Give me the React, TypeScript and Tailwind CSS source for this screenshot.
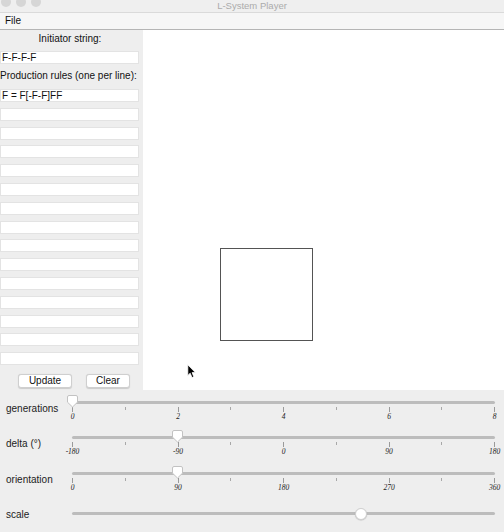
import React from "react";

const FONT = { fontFamily: '"Liberation Sans", Arial, sans-serif' };

function PentThumb({ pct }: { pct: number }) {
  return (
    <svg
      width="13"
      height="13"
      viewBox="0 0 13 13"
      className="absolute top-[-0.5px]"
      style={{ left: `calc(${pct}% - 6.5px)` }}
    >
      <path
        d="M1.5 2 Q1.5 0.5 3 0.5 H10 Q11.5 0.5 11.5 2 V7.2 L6.5 12 L1.5 7.2 Z"
        fill="#ffffff"
        stroke="#c2c2c2"
        strokeWidth="1"
      />
    </svg>
  );
}

function TickSlider({
  label,
  labels,
  pct,
}: {
  label: string;
  labels: string[];
  pct: number;
}) {
  const ticks = [0, 1, 2, 3, 4, 5, 6, 7, 8];
  return (
    <div className="flex h-[35px]">
      <div className="w-[72px] pl-[6px] pt-[8px] text-[10px] leading-[12px] text-[#1c1c1c]">
        {label}
      </div>
      <div className="relative w-[423px]">
        <div className="mt-[6px] h-[3px] rounded-full bg-[#bcbcbc]" />
        <div className="mt-[3px] flex h-[5px] items-start justify-between">
          {ticks.map((t) => (
            <div
              key={t}
              className={
                t % 2 === 0 ? "h-[5px] w-px bg-[#9a9a9a]" : "h-[3px] w-px bg-[#a8a8a8]"
              }
            />
          ))}
        </div>
        <div
          className="mt-[1px] flex justify-between text-[7.5px] italic leading-[8px] text-[#222]"
          style={{ fontFamily: '"Liberation Serif", "Times New Roman", serif' }}
        >
          {labels.map((l) => (
            <div key={l} className="flex w-px justify-center">
              <span className="whitespace-nowrap">{l}</span>
            </div>
          ))}
        </div>
        <PentThumb pct={pct} />
      </div>
    </div>
  );
}

function RuleField({ text }: { text?: string }) {
  return (
    <div className="flex h-[13px] w-[139px] items-center border border-[#e3e3e3] bg-white pl-[1px] text-[10px] leading-none text-[#111]">
      <span>{text ?? ""}</span>
    </div>
  );
}

export default function App() {
  const rules = Array.from({ length: 15 }, (_, i) => i);
  return (
    <div className="flex h-[532px] w-[504px] flex-col overflow-hidden bg-[#eeeeee]" style={FONT}>
      {/* title bar */}
      <div className="flex h-[13px] items-start overflow-hidden border-b border-[#dadada] bg-[#efefef]">
        <div className="-mt-[3px] flex w-[60px] gap-[5px] pl-[1px]">
          <div className="h-[10px] w-[10px] rounded-full bg-[#d6d6d6]" />
          <div className="h-[10px] w-[10px] rounded-full bg-[#d6d6d6]" />
          <div className="h-[10px] w-[10px] rounded-full bg-[#d6d6d6]" />
        </div>
        <div className="flex-1 text-center text-[9.5px] leading-[11px] text-[#ababab]">
          L-System Player
        </div>
        <div className="w-[60px]" />
      </div>
      {/* menu bar */}
      <div className="flex h-[17px] items-center border-b border-[#b5b5b5] bg-[#f6f6f6] pl-[5px] text-[10px] leading-[12px] text-[#111]">
        File
      </div>
      {/* main */}
      <div className="flex h-[360px]">
        <div className="flex w-[143px] flex-col bg-[#eeeeee] pt-[2px]">
          <div className="h-[14px] pr-[3px] text-center text-[10px] leading-[14px] text-[#111]">
            Initiator string:
          </div>
          <div className="mt-[5px]">
            <RuleField text="F-F-F-F" />
          </div>
          <div className="mt-[5px] h-[14px] whitespace-nowrap text-[10px] leading-[14px] text-[#111]">
            Production rules (one per line):
          </div>
          <div className="mt-[6px] flex flex-col gap-[5.8px]">
            {rules.map((i) => (
              <RuleField key={i} text={i === 0 ? "F = F[-F-F]FF" : undefined} />
            ))}
          </div>
          <div className="mt-[9px] flex">
            <button className="ml-[18px] h-[14px] w-[54px] rounded-[3px] border border-[#cfcfcf] bg-white text-[10px] leading-[12px] text-[#111] shadow-[0_0.5px_1px_rgba(0,0,0,0.15)]">
              Update
            </button>
            <button className="ml-[14px] h-[14px] w-[44px] rounded-[3px] border border-[#cfcfcf] bg-white text-[10px] leading-[12px] text-[#111] shadow-[0_0.5px_1px_rgba(0,0,0,0.15)]">
              Clear
            </button>
          </div>
        </div>
        <div className="relative flex-1 bg-white">
          <svg width="361" height="360" className="block">
            <rect x="77.5" y="218.5" width="92" height="92" fill="none" stroke="#545454" strokeWidth="1" />
          </svg>
          <svg width="10" height="15" viewBox="0 0 10 15" className="absolute left-[43.5px] top-[333.5px]">
            <path
              d="M0.8 0.8 L0.8 11.5 L3.2 9.2 L5 13.6 L6.8 12.8 L5.1 8.6 L8.4 8.6 Z"
              fill="#000"
              stroke="#fff"
              strokeWidth="0.8"
              strokeLinejoin="round"
            />
          </svg>
        </div>
      </div>
      {/* sliders */}
      <div className="flex flex-col pt-[5px]">
        <TickSlider label="generations" labels={["0", "2", "4", "6", "8"]} pct={0} />
        <TickSlider label="delta (°)" labels={["-180", "-90", "0", "90", "180"]} pct={25} />
        <div className="mt-[1px]">
          <TickSlider label="orientation" labels={["0", "90", "180", "270", "360"]} pct={25} />
        </div>
        <div className="flex h-[30px]">
          <div className="w-[72px] pl-[6px] pt-[8px] text-[10px] leading-[12px] text-[#1c1c1c]">scale</div>
          <div className="relative w-[423px] pt-[11px]">
            <div className="h-[3px] rounded-full bg-[#bcbcbc]" />
            <div
              className="absolute top-[6.5px] h-[12px] w-[12px] rounded-full border border-[#d0d0d0] bg-white shadow-[0_0.5px_1px_rgba(0,0,0,0.2)]"
              style={{ left: "calc(68.3% - 6px)" }}
            />
          </div>
        </div>
      </div>
    </div>
  );
}
